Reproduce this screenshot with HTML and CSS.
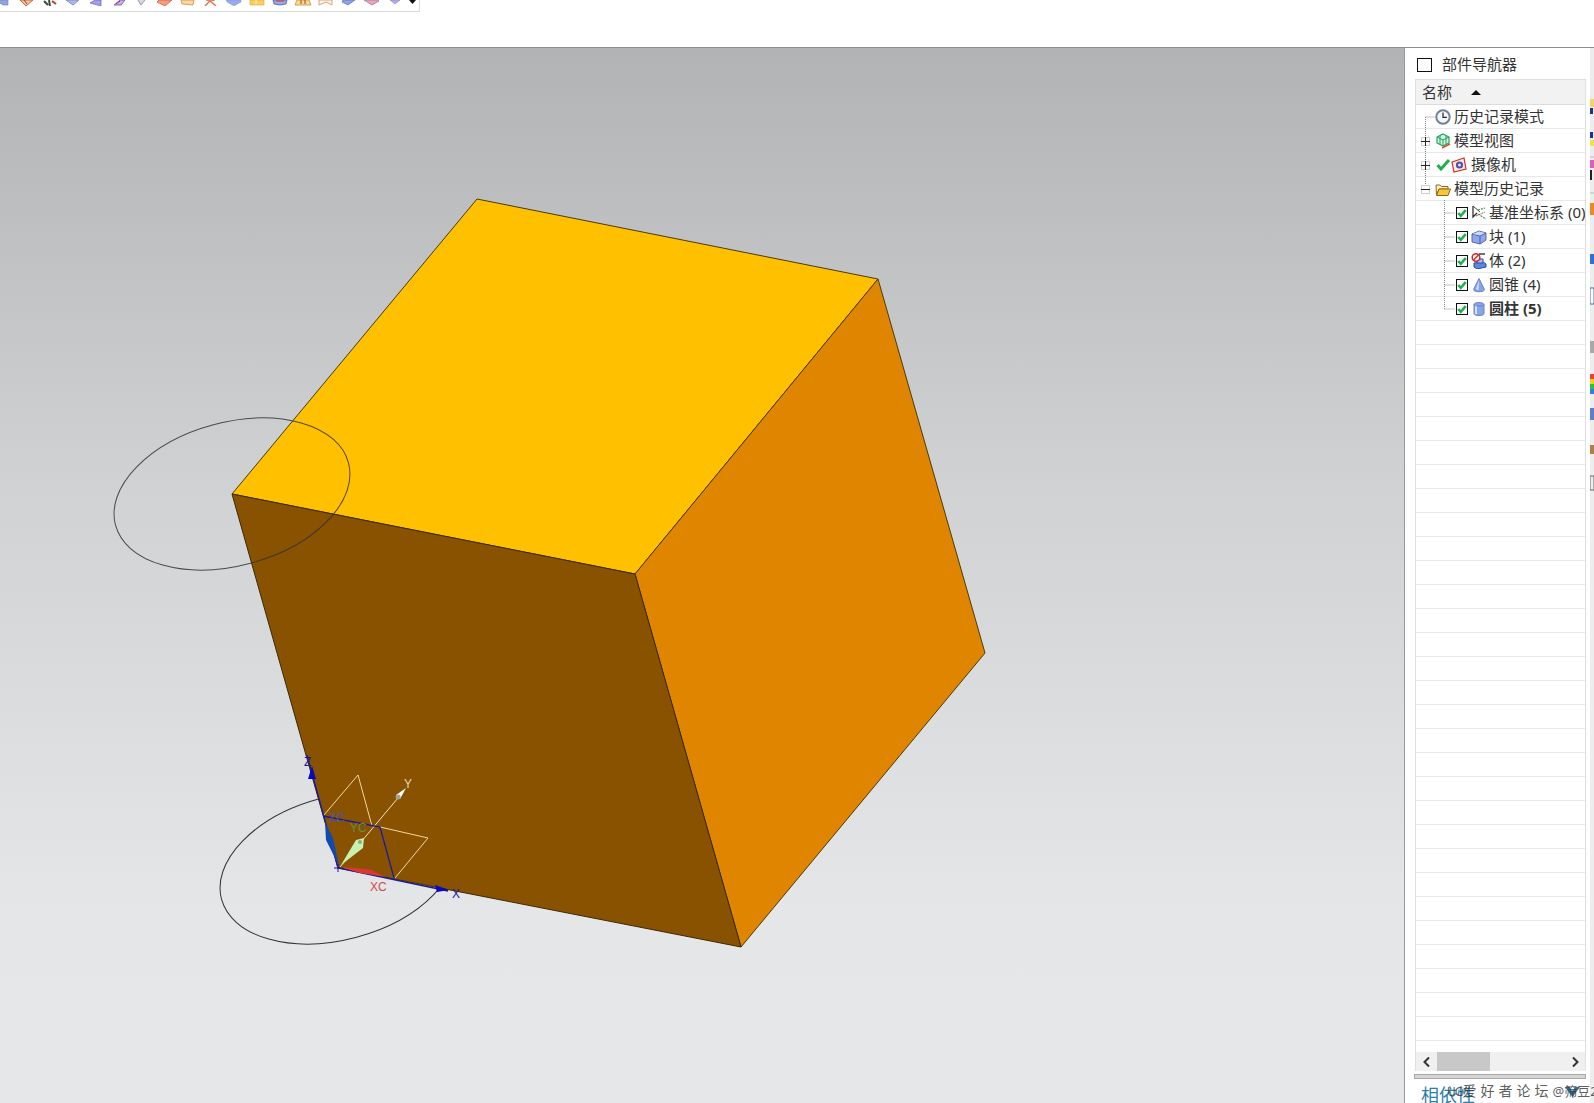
FILE: index.html
```html
<!DOCTYPE html>
<html lang="zh-CN">
<head>
<meta charset="utf-8">
<title>部件导航器</title>
<link rel="stylesheet" href="styles.css">
</head>
<body>
<div class="app">
  <header class="topbar">
    <div class="toolbar">
      <svg class="tb tb-first" viewBox="0 0 23 6"><path d="M3 0L11 5L16 5L16 0Z" fill="#93a4e2" stroke="#6f7fc4" stroke-width=".6"/></svg>
      <svg class="tb" viewBox="0 0 23 6"><path d="M5 0L11 6L18 0Z" fill="#f0c8a8" stroke="#c8623a"/><path d="M9 0L12 4" stroke="#a04020"/></svg>
      <svg class="tb" viewBox="0 0 23 6"><path d="M6 1L10 5M11 0L12 6" stroke="#33503a" stroke-width="2"/><path d="M14 1L18 4" stroke="#b04030" stroke-width="2"/></svg>
      <svg class="tb" viewBox="0 0 23 6"><path d="M5 0L12 5L18 0Z" fill="#a8bce8" stroke="#8090b8"/></svg>
      <svg class="tb" viewBox="0 0 23 6"><path d="M6 3L17 6L17 0L11 0Z" fill="#a6a0e6" stroke="#6660b8" stroke-width=".7"/></svg>
      <svg class="tb" viewBox="0 0 23 6"><path d="M7 5L13 0L18 0L14 5Z" fill="#c8b0e8" stroke="#6a50a8" stroke-width=".8"/><path d="M9 4L13 1" stroke="#c03050"/></svg>
      <svg class="tb" viewBox="0 0 23 6"><path d="M8 0L11 5L15 0" fill="#d8d8e0" stroke="#9a9aa8"/></svg>
      <svg class="tb" viewBox="0 0 23 6"><path d="M4 2L12 6L19 0L6 0Z" fill="#f2a080" stroke="#c85030" stroke-width=".7"/></svg>
      <svg class="tb" viewBox="0 0 23 6"><path d="M5 0L6 4L17 5L18 0Z" fill="#f6d8a0" stroke="#d88a50" stroke-width=".8"/></svg>
      <svg class="tb" viewBox="0 0 23 6"><path d="M6 6L11 1L17 6" fill="none" stroke="#e07050" stroke-width="1.4"/><path d="M7 0L11 1L16 0" fill="none" stroke="#e07050"/></svg>
      <svg class="tb" viewBox="0 0 23 6"><path d="M4 0L5 2L12 6L19 2L19 0Z" fill="#98ace8" stroke="#8094d8" stroke-width=".5"/></svg>
      <svg class="tb" viewBox="0 0 23 6"><path d="M5 0L5 5L19 5L19 0Z" fill="#f6d060" stroke="#e0b040" stroke-width=".7"/><path d="M11 0L11 4" stroke="#fff2b0"/></svg>
      <svg class="tb" viewBox="0 0 23 6"><path d="M5 0L6 4L12 5L18 4L19 0Z" fill="#9aa8e0" stroke="#5060a8" stroke-width=".8"/><path d="M8 1L16 1" stroke="#c84050"/></svg>
      <svg class="tb" viewBox="0 0 23 6"><path d="M4 5L6 0L18 0L20 5Z" fill="#f6dc90" stroke="#c89040" stroke-width=".8"/><path d="M10 0L10 4M14 0L14 4" stroke="#b04030"/></svg>
      <svg class="tb" viewBox="0 0 23 6"><path d="M5 5L5 0L18 0L18 5L12 2Z" fill="#fbf4e8" stroke="#d89a70" stroke-width=".9"/></svg>
      <svg class="tb" viewBox="0 0 23 6"><path d="M5 2L11 5L18 0L6 0Z" fill="#8ea4e2" stroke="#5c70b8" stroke-width=".7"/></svg>
      <svg class="tb" viewBox="0 0 23 6"><path d="M4 0L12 5L19 1L18 0Z" fill="#e8a8b8" stroke="#a878a8" stroke-width=".8"/></svg>
      <svg class="tb" viewBox="0 0 23 6"><path d="M7 0L12 4L17 0Z" fill="#b8a8e8" stroke="#9080c8" stroke-width=".6"/></svg>
      <svg class="tb tb-last" viewBox="0 0 23 6"><path d="M8 0L15 0L11.500 4Z" fill="#111"/></svg>
    </div>
  </header>

  <main class="main">
    <section class="viewport">
      <svg class="scene" viewBox="0 48 1404 1055" preserveAspectRatio="none">
        <ellipse cx="338" cy="868" rx="120.600" ry="71.700" transform="rotate(-15 338 868)" fill="none" stroke="#333" stroke-width="1"/>
        <polygon points="477,199 878,279 635,574 232,494" fill="#ffc000" stroke="#4a3a10" stroke-width="1"/>
        <polygon points="878,279 985,653 741,947 635,574" fill="#df8500" stroke="#4a3a10" stroke-width="1"/>
        <polygon points="232,494 635,574 741,947 338,868" fill="#885200" stroke="#3a2a08" stroke-width="1"/>
        <ellipse cx="232" cy="494" rx="120.600" ry="71.700" transform="rotate(-15 232 494)" fill="none" stroke="#333" stroke-opacity=".85" stroke-width="1"/>

        <polyline points="324,815 358,775 372,826" fill="none" stroke="#f0d8a0" stroke-width="1"/>
        <polyline points="380,827 428,838 395,878" fill="none" stroke="#f0d8a0" stroke-width="1"/>
        <line x1="340" y1="867" x2="403" y2="792" stroke="#f0e6c0" stroke-width="1"/>
        <polygon points="406,788 396,795 400,799" fill="#fff"/>
        <circle cx="398" cy="797" r="2.500" fill="#a0a0a0"/>
        <polygon points="341,865 356,840 364,838 363,848" fill="#c8f0b0"/>
        <circle cx="360" cy="842" r="2" fill="#90a880"/>

        <polyline points="307,755 338,868 448,891" fill="none" stroke="#1a1a9c" stroke-width="1.300"/>
        <polyline points="323,816 380,827 394,878" fill="none" stroke="#1a1a9c" stroke-width="1.300"/>
        <polygon points="340,867 358,868 372,870 385,877 360,873" fill="#d83a30"/>
        <polygon points="312,766 308,779 316,779" fill="#0808c0"/>
        <polygon points="435,885 449,890 437,892" fill="#0808c0"/>
        <polygon points="325,822 333,838 339,866 326,840" fill="#1248b0"/>
        <path d="M334 868H343M338 864V872" stroke="#1a1a9c" stroke-width="1"/>

        <text class="axis axis-z" x="304" y="766">Z</text>
        <text class="axis axis-x" x="452" y="898">X</text>
        <text class="axis axis-y" x="404" y="788">Y</text>
        <text class="axis axis-zc" x="329" y="822">ZC</text>
        <text class="axis axis-yc" x="350" y="832">YC</text>
        <text class="axis axis-xc" x="370" y="891">XC</text>
      </svg>
    </section>

    <aside class="panel">
      <div class="panel-title">
        <span class="title-box"></span>
        <span class="title-text">部件导航器</span>
      </div>

      <div class="tree">
        <div class="tree-head">
          <span>名称</span>
          <i class="sort-arrow"></i>
        </div>
        <div class="tree-body">
          <svg class="tree-lines" width="60" height="230" viewBox="0 0 60 230">
            <path d="M9.500 12V84M9.500 12H19" fill="none" stroke="#888" stroke-dasharray="1 1"/>
            <path d="M28.500 95V204M28.500 108H39M28.500 132H39M28.500 156H39M28.500 180H39M28.500 204H39" fill="none" stroke="#888" stroke-dasharray="1 1"/>
          </svg>

          <div class="row">
            <span class="exp"></span>
            <svg class="ic" viewBox="0 0 16 16"><circle cx="8" cy="8" r="6.700" fill="#f4f6fa" stroke="#6f8296" stroke-width="2"/><path d="M8 3.500V8.300H11.800" fill="none" stroke="#223" stroke-width="1.200"/></svg>
            <span class="lbl">历史记录模式</span>
          </div>
          <div class="row">
            <span class="exp plus"></span>
            <svg class="ic" viewBox="0 0 16 16"><path d="M8 1L14 4V10L8 13L2 10V4Z" fill="#d8f4e4" stroke="#20a060" stroke-width="1.200"/><path d="M2 4L8 7L14 4M8 7V13M5 2.500V11.500M11 2.500V11.500" fill="none" stroke="#20a060"/><path d="M7 15L15 11" stroke="#d85030" stroke-width="1.400"/></svg>
            <span class="lbl">模型视图</span>
          </div>
          <div class="row">
            <span class="exp plus"></span>
            <svg class="ic" viewBox="0 0 16 16"><path d="M2.500 8L6 12L14 3" fill="none" stroke="#20b04a" stroke-width="3"/></svg>
            <svg class="ic" viewBox="0 0 16 16"><path d="M1 5L13 1L15 12L3 15Z" fill="#fbe8e4" stroke="#c03828" stroke-width="1.200"/><circle cx="8.500" cy="8" r="3.600" fill="#5a4aa8"/><circle cx="8.500" cy="8" r="1.500" fill="#e8e4f8"/></svg>
            <span class="lbl lbl-cam">摄像机</span>
          </div>
          <div class="row">
            <span class="exp minus"></span>
            <svg class="ic" viewBox="0 0 16 16"><path d="M1 4H5L6.500 5.500H13V8H4L1.500 14Z" fill="#fff3c0" stroke="#8a6a20"/><path d="M4 8H15.500L13 14.500H1.500Z" fill="#f8c438" stroke="#8a6a20"/></svg>
            <span class="lbl">模型历史记录</span>
          </div>

          <div class="row sub">
            <span class="chk"><svg viewBox="0 0 12 12"><path d="M1.500 6L4.500 9.500L10.500 2.500" fill="none" stroke="#20b04a" stroke-width="3"/></svg></span>
            <svg class="ic" viewBox="0 0 16 16"><path d="M2 1V12L6 8" fill="none" stroke="#222" stroke-width="1.200"/><path d="M2 1L9 7" stroke="#444"/><path d="M7 5L14 3M7 9L15 14" stroke="#3a9a60" stroke-dasharray="2 1" stroke-width="1.200"/><path d="M5 11L14 7" stroke="#c84040" stroke-dasharray="2 1"/></svg>
            <span class="lbl lbl-sub">基准坐标系 (0)</span>
          </div>
          <div class="row sub">
            <span class="chk"><svg viewBox="0 0 12 12"><path d="M1.500 6L4.500 9.500L10.500 2.500" fill="none" stroke="#20b04a" stroke-width="3"/></svg></span>
            <svg class="ic" viewBox="0 0 16 16"><path d="M1 5L8 2L15 4V11L9 15L1 13Z" fill="#8fa6ea" stroke="#5a6ab0"/><path d="M1 5L9 7L15 4M9 7V15" fill="none" stroke="#4a5aa0"/><path d="M1.500 5L8 2.500L14 4L9 6.500Z" fill="#cdd8f6"/></svg>
            <span class="lbl lbl-sub">块 (1)</span>
          </div>
          <div class="row sub">
            <span class="chk"><svg viewBox="0 0 12 12"><path d="M1.500 6L4.500 9.500L10.500 2.500" fill="none" stroke="#20b04a" stroke-width="3"/></svg></span>
            <svg class="ic" viewBox="0 0 16 16"><path d="M3 10L12 9L15 11V14L6 16L3 14Z" fill="#5e86de" stroke="#2a4a9c"/><path d="M6 6H12V10H6Z" fill="#a8c0f0" stroke="#2a4a9c"/><circle cx="5" cy="4.500" r="3.800" fill="#fff" stroke="#d02828" stroke-width="1.500"/><path d="M2.500 7L7.500 2" stroke="#d02828" stroke-width="1.500"/><path d="M8 1H14" stroke="#111" stroke-width="1.200"/></svg>
            <span class="lbl lbl-sub">体 (2)</span>
          </div>
          <div class="row sub">
            <span class="chk"><svg viewBox="0 0 12 12"><path d="M1.500 6L4.500 9.500L10.500 2.500" fill="none" stroke="#20b04a" stroke-width="3"/></svg></span>
            <svg class="ic" viewBox="0 0 16 16"><path d="M8 1.500L13.500 12.500C13.500 15.500 2.500 15.500 2.500 12.500Z" fill="#86a2ea" stroke="#6a84cc"/><path d="M8 3L5 12C6 13 7 13 7.500 13Z" fill="#d4dff8"/></svg>
            <span class="lbl lbl-sub">圆锥 (4)</span>
          </div>
          <div class="row sub">
            <span class="chk"><svg viewBox="0 0 12 12"><path d="M1.500 6L4.500 9.500L10.500 2.500" fill="none" stroke="#20b04a" stroke-width="3"/></svg></span>
            <svg class="ic" viewBox="0 0 16 16"><path d="M3 3.500C3 0.800 13 0.800 13 3.500V12.500C13 15.200 3 15.200 3 12.500Z" fill="#8aa4e8" stroke="#6a84cc"/><path d="M5 4V13" stroke="#d4dff8" stroke-width="2"/><path d="M3 3.500C3 5.500 13 5.500 13 3.500" fill="none" stroke="#6a84cc"/></svg>
            <span class="lbl lbl-sub lbl-bold">圆柱 (5)</span>
          </div>
        </div>

        <div class="hscroll">
          <span class="sbtn"><svg width="10" height="12" viewBox="0 0 10 12"><path d="M7 1.500L2.500 6L7 10.500" fill="none" stroke="#333" stroke-width="2"/></svg></span>
          <span class="thumb"></span>
          <span class="strack"></span>
          <span class="sbtn"><svg width="10" height="12" viewBox="0 0 10 12"><path d="M3 1.500L7.500 6L3 10.500" fill="none" stroke="#333" stroke-width="2"/></svg></span>
        </div>
      </div>

      <div class="sash"></div>

      <div class="dep">
        <span class="dep-text">相依性</span>
        <svg class="dep-icon" width="15" height="10" viewBox="0 0 15 10"><path d="M0 0H5L7.500 5L10 0H15L7.500 10Z" fill="#2b6f92"/></svg>
      </div>
    </aside>

    <div class="strip">
      <svg width="4" height="1055" viewBox="0 0 4 1055">
        <path d="M0 109H4M0 145H4" stroke="#bbb"/>
        <rect y="51" width="4" height="8" fill="#f5d468"/><rect y="60" width="3" height="6" fill="#24308c"/>
        <rect y="84" width="3" height="6" fill="#24308c"/><rect y="92" width="4" height="6" fill="#f2e24a"/>
        <rect y="112" width="4" height="8" fill="#d860c0"/><rect y="122" width="2" height="10" fill="#222"/>
        <rect y="155" width="4" height="12" fill="#e88a28"/>
        <rect y="206" width="4" height="10" fill="#2c70d0"/>
        <rect y="240" width="4" height="16" fill="#fff" stroke="#4a6ab0"/>
        <rect y="293" width="4" height="12" fill="#a8a8a8"/>
        <rect y="326" width="4" height="5" fill="#e84040"/><rect y="331" width="4" height="5" fill="#f0d020"/><rect y="336" width="4" height="5" fill="#30c040"/><rect y="341" width="4" height="5" fill="#3080e0"/>
        <rect y="360" width="4" height="12" fill="#5a80c8"/>
        <rect y="397" width="4" height="9" fill="#b08040"/>
        <rect y="428" width="4" height="14" fill="#eee" stroke="#666"/>
      </svg>
    </div>
  </main>

  <div class="watermark"><span class="wm-latin">UG</span>爱好者论坛<span class="wm-tail">@筛豆2</span></div>
</div>
</body>
</html>
```
FILE: styles.css
```css
* { box-sizing: border-box; }

html, body {
  margin: 0;
  padding: 0;
  height: 100%;
  overflow: hidden;
  background: #fff;
}

.app {
  position: relative;
  display: flex;
  flex-direction: column;
  width: 1594px;
  height: 1103px;
  overflow: hidden;
  font-family: "Noto Sans", "Noto Sans CJK SC", sans-serif;
  color: #333;
}

.topbar {
  flex: 0 0 48px;
  background: #fff;
  border-bottom: 1px solid #8b8d8f;
}

.toolbar {
  display: flex;
  width: 420px;
  height: 12px;
  overflow: hidden;
  border-right: 1px solid #dcdcdc;
  border-bottom: 1px solid #dcdcdc;
}

.tb {
  flex: 0 0 23px;
  width: 23px;
  height: 6px;
}

.tb-first { margin-left: -8px; }
.tb-last { margin-left: -5px; }

.main {
  flex: 1;
  display: flex;
  min-height: 0;
}

.viewport {
  flex: 0 0 1404px;
  background: linear-gradient(180deg, #b2b3b5 0%, #d0d2d4 42%, #e5e6e8 82%, #e6e7e9 100%);
}

.scene {
  display: block;
  width: 100%;
  height: 100%;
}

.axis {
  font-family: "Liberation Sans", sans-serif;
  font-size: 12px;
}

.axis-z, .axis-x { fill: #1a1a9c; }
.axis-y { fill: #e8d8b0; }
.axis-zc { fill: #4858a8; }
.axis-yc { fill: #5f9440; }
.axis-xc { fill: #d24a4a; }

.panel {
  flex: 0 0 186px;
  display: flex;
  flex-direction: column;
  padding-left: 10px;
  background: #fff;
  border-left: 1px solid #999;
  overflow: hidden;
}

.panel-title {
  flex: 0 0 31px;
  display: flex;
  align-items: center;
  padding: 2px 0 0 2px;
}

.title-box {
  width: 15px;
  height: 14px;
  border: 1.500px solid #111;
}

.title-text {
  margin-left: 10px;
  font-size: 15px;
  line-height: 20px;
  margin-top: -2px;
}

.tree {
  flex: 1;
  display: flex;
  flex-direction: column;
  min-height: 0;
  width: 171px;
  border: 1px solid #e0e0e0;
  border-bottom: 0;
}

.tree-head {
  flex: 0 0 25px;
  display: flex;
  align-items: center;
  padding-left: 6px;
  background: #f2f2f2;
  border-bottom: 1px solid #dcdcdc;
  font-size: 15px;
  line-height: 20px;
}

.sort-arrow {
  width: 0;
  height: 0;
  margin-left: 19px;
  border-left: 5px solid transparent;
  border-right: 5px solid transparent;
  border-bottom: 5px solid #111;
}

.tree-body {
  position: relative;
  flex: 1;
  min-height: 0;
  overflow: hidden;
  background: repeating-linear-gradient(180deg, #fff 0, #fff 23px, #e8e8e8 23px, #e8e8e8 24px);
}

.tree-lines {
  position: absolute;
  left: 0;
  top: 0;
}

.row {
  position: relative;
  display: flex;
  align-items: center;
  height: 24px;
  padding-left: 5px;
  white-space: nowrap;
  font-size: 15px;
  line-height: 20px;
}

.sub { padding-left: 40px; }

.exp {
  position: relative;
  flex: 0 0 9px;
  height: 9px;
  margin-right: 5px;
}

.plus, .minus {
  background: #fff;
  border: 1px solid #cfcfcf;
}

.plus::before, .minus::before {
  content: "";
  position: absolute;
  left: -1px;
  top: 3px;
  width: 9px;
  height: 1px;
  background: #222;
}

.plus::after {
  content: "";
  position: absolute;
  left: 3px;
  top: -1px;
  width: 1px;
  height: 9px;
  background: #222;
}

.ic {
  flex: 0 0 16px;
  width: 16px;
  height: 16px;
}

.lbl {
  margin-left: 3px;
  margin-top: -2px;
}
.lbl-cam { margin-left: 4px; }
.lbl-sub { margin-left: 2px; }
.lbl-bold { font-weight: 700; }

.chk {
  flex: 0 0 12px;
  display: block;
  width: 12px;
  height: 12px;
  margin-right: 3px;
  background: #fff;
  border: 1px solid #111;
}

.chk svg {
  display: block;
  width: 10px;
  height: 10px;
}

.hscroll {
  flex: 0 0 19px;
  display: flex;
  align-items: stretch;
  background: #f0f0f0;
}

.sbtn {
  flex: 0 0 21px;
  display: flex;
  align-items: center;
  justify-content: center;
}

.thumb {
  flex: 0 0 53px;
  background: #c8c8c8;
}

.strack { flex: 1; }

.sash {
  flex: 0 0 5px;
  width: 172px;
  margin: 3px 0 0 -1px;
  background: #d6d6d6;
  border: 1px solid #a8a8a8;
}

.dep {
  flex: 0 0 24px;
  display: flex;
  align-items: flex-start;
  justify-content: space-between;
  width: 172px;
  padding: 4px 7px 0 6px;
  overflow: hidden;
}

.dep-text {
  font-size: 18px;
  line-height: 24px;
  color: #2f7fa8;
}

.dep-icon {
  margin-top: 4px;
}

.strip {
  flex: 0 0 4px;
  background: #ededed;
}

.strip svg { display: block; }

.watermark {
  position: absolute;
  left: 1447px;
  top: 1081px;
  font-size: 14px;
  line-height: 20px;
  letter-spacing: 4px;
  white-space: nowrap;
  color: rgba(50, 50, 50, .8);
}

.wm-latin {
  font-size: 12px;
  letter-spacing: -1px;
}

.wm-tail {
  font-size: 13px;
  letter-spacing: 0;
}
```
